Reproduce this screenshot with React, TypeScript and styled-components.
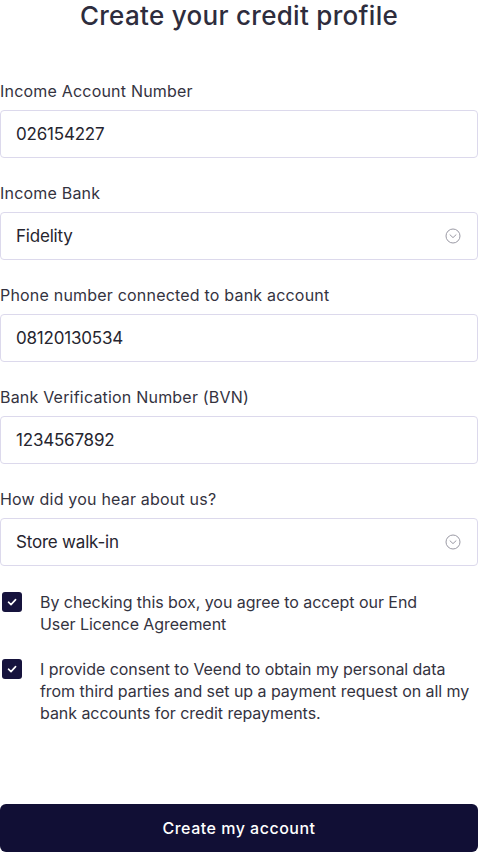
import styled, { createGlobalStyle } from 'styled-components';

const GlobalStyle = createGlobalStyle`
  html, body {
    margin: 0;
    padding: 0;
    background: #ffffff;
    font-family: Inter, "Noto Sans", sans-serif;
  }
  * { box-sizing: border-box; }
`;

const Page = styled.div`
  width: 478px;
  display: flex;
  flex-direction: column;
`;

const Title = styled.h1`
  margin: 0;
  padding-top: 1px;
  text-align: center;
  font-size: 26px;
  line-height: 30px;
  font-weight: 500;
  color: #2e2d3d;
  letter-spacing: 0.3px;
`;

const Form = styled.form`
  display: flex;
  flex-direction: column;
  margin-top: 50px;
`;

const Field = styled.div`
  display: flex;
  flex-direction: column;
  margin-bottom: 25px;
`;

const Label = styled.label`
  font-size: 16px;
  line-height: 20px;
  color: #34333f;
  margin-bottom: 9px;
  letter-spacing: 0.2px;
`;

const Box = styled.div`
  position: relative;
  height: 48px;
  border: 1px solid #dcd9ec;
  border-radius: 4px;
  display: flex;
  align-items: center;
  padding: 0 15px;
  font-size: 17px;
  color: #26252f;
  letter-spacing: -0.2px;
`;

const Value = styled.span`
  flex: 1;
`;

const Chevron = styled.svg`
  width: 16px;
  height: 16px;
  margin-right: 1px;
`;

const Consent = styled.div<{ $top: number }>`
  display: flex;
  gap: 18px;
  padding-left: 2px;
  margin-top: ${(p) => p.$top}px;
`;

const Check = styled.div`
  flex: none;
  width: 20px;
  height: 20px;
  border-radius: 3px;
  background: #16133d;
  display: flex;
  align-items: center;
  justify-content: center;
  margin-top: 1px;
`;

const ConsentText = styled.p`
  margin: 0;
  font-size: 16px;
  line-height: 22px;
  color: #34333f;
  letter-spacing: -0.05px;
`;

const Submit = styled.button`
  margin-top: 80px;
  height: 48px;
  width: 100%;
  border: none;
  border-radius: 6px;
  background: #110f35;
  color: #ffffff;
  font-family: Inter, "Noto Sans", sans-serif;
  font-size: 16px;
  font-weight: 500;
  letter-spacing: 0.5px;
`;

const fields = [
  { label: 'Income Account Number', value: '026154227' },
  { label: 'Income Bank', value: 'Fidelity', select: true },
  { label: 'Phone number connected to bank account', value: '08120130534' },
  { label: 'Bank Verification Number (BVN)', value: '1234567892' },
  { label: 'How did you hear about us?', value: 'Store walk-in', select: true },
];

const TickIcon = () => (
  <svg width="12" height="12" viewBox="0 0 12 12" fill="none">
    <path d="M2.5 6.2 L5 8.6 L9.6 3.6" stroke="#fff" strokeWidth="1.6" strokeLinecap="round" strokeLinejoin="round" />
  </svg>
);

export default function App() {
  return (
    <Page>
      <GlobalStyle />
      <Title>Create your credit profile</Title>
      <Form>
        {fields.map((f) => (
          <Field key={f.label}>
            <Label>{f.label}</Label>
            <Box>
              <Value>{f.value}</Value>
              {f.select && (
                <Chevron viewBox="0 0 16 16" fill="none">
                  <circle cx="8" cy="8" r="7" stroke="#9b9aa5" strokeWidth="1" />
                  <path d="M5 6.8 L8 9.6 L11 6.8" stroke="#9b9aa5" strokeWidth="1" strokeLinecap="round" strokeLinejoin="round" />
                </Chevron>
              )}
            </Box>
          </Field>
        ))}
        <Consent $top={0}>
          <Check><TickIcon /></Check>
          <ConsentText>
            By checking this box, you agree to accept our End
            <br />
            User Licence Agreement
          </ConsentText>
        </Consent>
        <Consent $top={23}>
          <Check><TickIcon /></Check>
          <ConsentText>
            I provide consent to Veend to obtain my personal data
            <br />
            from third parties and set up a payment request on all my
            <br />
            bank accounts for credit repayments.
          </ConsentText>
        </Consent>
        <Submit type="button">Create my account</Submit>
      </Form>
    </Page>
  );
}
